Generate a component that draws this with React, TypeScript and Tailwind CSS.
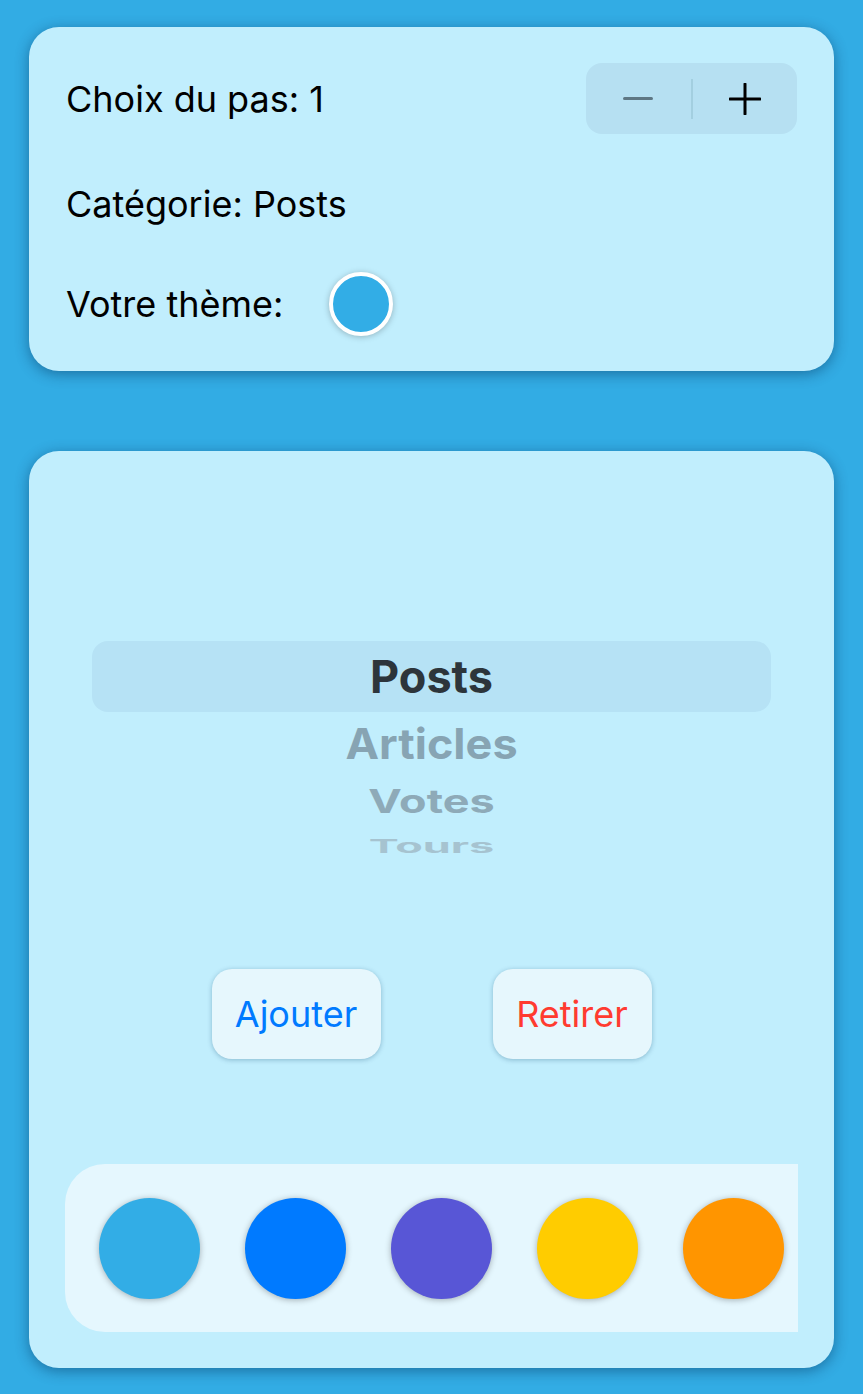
import { useState } from "react";

const couleurs = ["#32ade6", "#007aff", "#5856d6", "#ffcc00", "#ff9500"];

export default function App() {
  const [pas, setPas] = useState(1);

  return (
    <div
      className="min-h-screen bg-[#32ace4] px-[29px] pt-[27px] pb-[26px] flex flex-col gap-[80px]"
      style={{ fontFamily: "Inter, 'Liberation Sans', sans-serif" }}
    >
      {/* réglages */}
      <div className="h-[344px] rounded-[30px] bg-[#c1eefd] shadow-[0_3px_14px_rgba(0,40,80,0.45)] px-[37px] pt-[36px] flex flex-col text-black text-[36px]">
        <div className="h-[71px] flex items-center justify-between">
          <span>Choix du pas: {pas}</span>
          <div className="w-[211px] h-[71px] rounded-[16px] bg-[#b6e0f2] flex items-center">
            <button
              onClick={() => setPas(Math.max(1, pas - 1))}
              className="flex-1 h-full flex items-center justify-center"
            >
              <span className="block w-[30px] h-[3px] rounded-full bg-[#5e7784]" />
            </button>
            <span className="w-[2px] h-[40px] bg-[#a3cfe0]" />
            <button
              onClick={() => setPas(pas + 1)}
              className="flex-1 h-full flex items-center justify-center"
            >
              <svg width="32" height="32" viewBox="0 0 32 32">
                <path d="M16 1v30M1 16h30" stroke="black" strokeWidth="3" strokeLinecap="round" />
              </svg>
            </button>
          </div>
        </div>
        <div className="mt-[35px] h-[70px] flex items-center">Catégorie: Posts</div>
        <div className="mt-[30px] h-[70px] flex items-center gap-[46px]">
          <span>Votre thème:</span>
          <span className="w-[64px] h-[64px] rounded-full border-[4px] border-white bg-[#32ade6] shadow-[0_1px_6px_rgba(0,0,0,0.25)]" />
        </div>
      </div>

      {/* catégories */}
      <div className="h-[917px] rounded-[30px] bg-[#c1eefd] shadow-[0_3px_14px_rgba(0,40,80,0.45)] flex flex-col">
        <div className="px-[63px] pt-[190px] flex flex-col font-bold text-[45px]">
          <div className="h-[71px] rounded-[16px] bg-[#b6e2f5] flex items-center justify-center text-[#2d353b]">
            Posts
          </div>
          <div className="h-[64px] flex items-center justify-center text-[#87a4b3]">
            <span className="scale-y-[0.95]">Articles</span>
          </div>
          <div className="h-[52px] flex items-center justify-center text-[#8eaab8]">
            <span className="scale-y-[0.72]">Votes</span>
          </div>
          <div className="h-[36px] flex items-center justify-center text-[#a6c3d0]">
            <span className="scale-y-[0.42]">Tours</span>
          </div>
        </div>

        <div className="mt-[105px] flex justify-center gap-[112px] text-[36px]">
          <button className="w-[169px] h-[90px] rounded-[20px] bg-[#e6f7fd] shadow-[0_1px_5px_rgba(0,60,100,0.3)] text-[#007aff]">
            Ajouter
          </button>
          <button className="w-[159px] h-[90px] rounded-[20px] bg-[#e6f7fd] shadow-[0_1px_5px_rgba(0,60,100,0.3)] text-[#ff3b30]">
            Retirer
          </button>
        </div>

        <div className="mt-auto mb-[36px] mx-[36px] h-[168px] rounded-l-[40px] bg-[#e5f7fe] flex items-center gap-[45px] pl-[34px] overflow-hidden">
          {couleurs.map((c) => (
            <span
              key={c}
              className="shrink-0 w-[101px] h-[101px] rounded-full shadow-[0_1px_6px_rgba(0,0,0,0.3)]"
              style={{ backgroundColor: c }}
            />
          ))}
        </div>
      </div>
    </div>
  );
}
